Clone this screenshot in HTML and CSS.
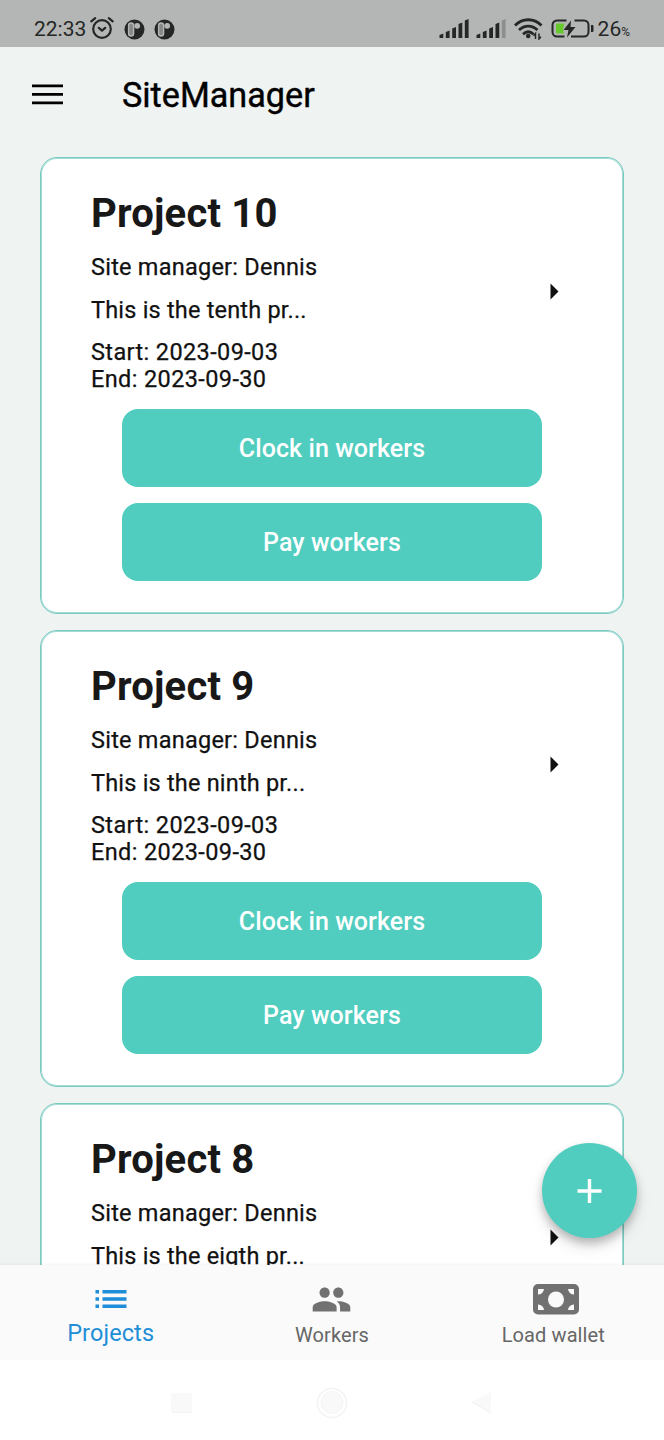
FILE: index.html
```html
<!DOCTYPE html>
<html lang="en">
<head>
<meta charset="utf-8">
<title>SiteManager</title>
<link rel="stylesheet" href="styles.css">
</head>
<body>
<div class="screen">
  <header class="status">
    <span class="clock">22:33</span>
    <svg class="alarm" width="24" height="24" viewBox="0 0 24 24" fill="none" stroke="#252726" stroke-width="2.2" stroke-linecap="round" stroke-linejoin="round"><circle cx="12" cy="13" r="8.8"/><path d="M8.800 11.800l3.200 2.800 3.200-2.800M1.300 5.400L5.200 2.100M22.700 5.400L18.800 2.100"/></svg>
    <svg class="pill-icon" width="21" height="21" viewBox="0 0 21 21"><circle cx="10.500" cy="10.500" r="10" fill="#252726"/><rect x="4.600" y="4" width="5" height="13" rx="2.500" fill="#858887" stroke="#b4b6b5" stroke-width="1.400"/><circle cx="13.200" cy="6.800" r="2.900" fill="#b4b6b5"/></svg>
    <svg class="pill-icon" width="21" height="21" viewBox="0 0 21 21"><circle cx="10.500" cy="10.500" r="10" fill="#252726"/><rect x="4.600" y="4" width="5" height="13" rx="2.500" fill="#858887" stroke="#b4b6b5" stroke-width="1.400"/><circle cx="13.200" cy="6.800" r="2.900" fill="#b4b6b5"/></svg>
    <div class="status-right">
      <svg width="30" height="20" viewBox="0 0 30 20" fill="#252726"><path d="M.5 16l3.800-1.500V19H.5zM6.800 13l3.800-1.500V19H6.800zM13.200 9.500L17 8v11h-3.800zM19.500 5l3.800-1.500V19h-3.800zM25.800 1.500L29.600 0v19h-3.800z"/></svg>
      <svg class="signal-two" width="30" height="20" viewBox="0 0 30 20" fill="#252726"><path d="M.5 16l3.800-1.500V19H.5zM6.800 13l3.800-1.500V19H6.800zM13.200 9.500L17 8v11h-3.800zM19.500 5l3.800-1.500V19h-3.800z"/><path fill="#8d8f8e" d="M25.800 1.500L29.600 0v19h-3.800z"/></svg>
      <svg class="wifi" width="29" height="22" viewBox="0 0 29 22"><g fill="none" stroke="#252726" stroke-width="2.800"><path d="M1 7.500C8.500-.2 20 -.2 27.500 7.500"/><path d="M5 12c5.500-5.300 13-5.300 18.500 0"/><path d="M9 16.200c3.300-3 7.200-3 10.500 0"/></g><circle cx="14.200" cy="18" r="2.300" fill="#252726"/><path d="M21.500 21v-5.500l-2 2.200M25 15.500V21l2-2.200" fill="none" stroke="#252726" stroke-width="1.500"/></svg>
      <svg class="battery" width="43" height="22" viewBox="0 0 43 22"><path d="M15.500 2.500H6a4.500 4.500 0 0 0-4.500 4.500v7A4.500 4.500 0 0 0 6 18.500h7.500M23.500 2.500H33A4.500 4.500 0 0 1 37.500 7v7a4.500 4.500 0 0 1-4.500 4.500H20" fill="none" stroke="#252726" stroke-width="2"/><path d="M5 5.500h8.500l-1.500 6 1 4H6.500A1.500 1.500 0 0 1 5 14z" fill="#66c92c"/><path d="M20 2.500L12.500 12h5l-1.500 7.500L24.500 9h-5z" fill="#252726"/><path d="M40 7h1.500a1 1 0 0 1 1 1v5a1 1 0 0 1-1 1H40z" fill="#252726"/></svg>
      <span class="percent">26<small>%</small></span>
    </div>
  </header>

  <div class="appbar">
    <svg class="menu" width="32" height="22" viewBox="0 0 32 22" fill="#000"><path d="M0 .5h31v2.800H0zM0 8.900h31v2.800H0zM0 17.400h31v2.800H0z"/></svg>
    <h1 class="app-title">SiteManager</h1>
  </div>

  <main class="projects">
    <article class="card">
      <h2 class="name">Project 10</h2>
      <p class="manager">Site manager: Dennis</p>
      <p class="desc">This is the tenth pr...</p>
      <p class="dates">Start: 2023-09-03<br>End: 2023-09-30</p>
      <button class="action">Clock in workers</button>
      <button class="action">Pay workers</button>
      <svg class="arrow" width="9" height="17" viewBox="0 0 9 17"><path d="M.5 .5l8 8-8 8z" fill="#111"/></svg>
    </article>
    <article class="card">
      <h2 class="name">Project 9</h2>
      <p class="manager">Site manager: Dennis</p>
      <p class="desc">This is the ninth pr...</p>
      <p class="dates">Start: 2023-09-03<br>End: 2023-09-30</p>
      <button class="action">Clock in workers</button>
      <button class="action">Pay workers</button>
      <svg class="arrow" width="9" height="17" viewBox="0 0 9 17"><path d="M.5 .5l8 8-8 8z" fill="#111"/></svg>
    </article>
    <article class="card">
      <h2 class="name">Project 8</h2>
      <p class="manager">Site manager: Dennis</p>
      <p class="desc">This is the eigth pr...</p>
      <svg class="arrow" width="9" height="17" viewBox="0 0 9 17"><path d="M.5 .5l8 8-8 8z" fill="#111"/></svg>
    </article>
    <button class="fab" aria-label="Add project"><svg width="26" height="26" viewBox="0 0 26 26"><path d="M12.500 1v24M.5 13h24" stroke="#fff" stroke-width="3.400"/></svg></button>
  </main>

  <nav class="tabs">
    <a class="tab active">
      <svg width="32" height="36" viewBox="0 0 32 36" fill="#1e8ed8"><path d="M.5 9h3.500v3.500H.5zM.5 16.200h3.500v3.500H.5zM.5 23.400h3.500v3.500H.5zM7.500 9h24v3.500h-24zM7.500 16.200h24v3.500h-24zM7.500 23.400h24v3.500h-24z"/></svg>
      <span>Projects</span>
    </a>
    <a class="tab">
      <svg width="41" height="41" viewBox="0 0 24 24" fill="#717171"><path d="M16 11c1.660 0 2.990-1.340 2.990-3S17.660 5 16 5s-3 1.340-3 3 1.340 3 3 3zm-8 0c1.660 0 2.990-1.340 2.990-3S9.660 5 8 5 5 6.340 5 8s1.340 3 3 3zm0 2c-2.330 0-7 1.170-7 3.500V19h14v-2.500c0-2.330-4.670-3.500-7-3.500zm8 0c-.29 0-.62.02-.97.05 1.160.84 1.970 1.970 1.970 3.450V19h6v-2.500c0-2.330-4.670-3.500-7-3.500z"/></svg>
      <span>Workers</span>
    </a>
    <a class="tab wallet">
      <svg width="46" height="36" viewBox="0 0 46 36"><rect y="3" width="46" height="30.500" rx="5" fill="#717171"/><path d="M5 8h6a6 6 0 0 1-6 5.500zM41 8h-6a6 6 0 0 0 6 5.500zM5 29h6a6 6 0 0 0-6-5.500zM41 29h-6a6 6 0 0 1 6-5.500z" fill="#fafafa"/><circle cx="23" cy="18.500" r="8" fill="#fafafa"/></svg>
      <span>Load wallet</span>
    </a>
  </nav>

  <footer class="system">
    <svg width="22" height="22" viewBox="0 0 22 22"><path d="M0 1h21v19H0z" fill="#f9f9f9"/><path d="M1 20.500h20" stroke="#f2f2f2"/></svg>
    <svg class="home" width="32" height="32" viewBox="0 0 32 32"><circle cx="16" cy="16" r="14.500" fill="#fff" stroke="#f3f3f3" stroke-width="1.500"/><circle cx="16" cy="15.500" r="11" fill="#f9f9f9" stroke="#f5f5f5"/></svg>
    <svg width="22" height="24" viewBox="0 0 22 24"><path d="M20 1v20L1 11z" fill="#f9f9f9"/><path d="M1 11l19 11" stroke="#f0f0f0"/></svg>
  </footer>
</div>
</body>
</html>
```
FILE: styles.css
```css
* { box-sizing: border-box; }
body { margin: 0; font-family: Roboto, "Noto Sans", sans-serif; }
h1, h2, p { margin: 0; }
svg { display: block; flex: none; }
.screen { width: 664px; height: 1440px; display: flex; flex-direction: column; overflow: hidden; background: #eff3f2; }

.status { height: 47px; flex: none; display: flex; align-items: center; padding: 11px 34px 0; background: #b4b6b5; color: #252726; }
.clock { width: 56px; font-size: 21px; line-height: 26px; }
.alarm { margin-bottom: 2px; }
.pill-icon { margin-left: 9.500px; }
.status-right { margin-left: auto; display: flex; align-items: center; }
.signal-two { margin-left: 7px; }
.wifi { margin-left: 8px; }
.battery { margin-left: 8px; }
.percent { margin: 3px 0 0 4px; font-size: 21px; line-height: 26px; }
.percent small { font-size: 12px; }

.appbar { height: 110px; flex: none; display: flex; align-items: center; padding: 0 32px 14px; }
.menu { margin-right: 58px; }
.app-title { font-size: 34.200px; line-height: 44px; font-weight: 400; color: #000; -webkit-text-stroke: .4px #000; }

.projects { position: relative; height: 1108px; flex: none; display: flex; flex-direction: column; gap: 16px; padding: 0 40px; overflow: hidden; }
.card { position: relative; height: 457px; flex: none; padding: 31px 80px 0 50px; background: #fff; border: 1px solid #79cbc0; box-shadow: inset 0 0 0 1px #a4dcd5; border-radius: 17px; color: #111; }
.name { font-size: 40px; line-height: 50px; font-weight: 700; letter-spacing: .2px; color: #181818; }
.manager, .desc, .dates { font-size: 23.500px; line-height: 27px; letter-spacing: .24px; -webkit-text-stroke: .25px #111; }
.manager { margin-top: 15px; }
.desc { margin-top: 16px; letter-spacing: .2px; }
.dates { margin-top: 15px; letter-spacing: .38px; }
.action { display: block; width: 420px; height: 78px; margin: 16px 0 0 31px; padding: 2px 0 0; border: 0; border-radius: 16px; background: #50cdbf; color: #fff; font: 500 25px/28px Roboto, sans-serif; letter-spacing: .08px; }
.arrow { position: absolute; left: 509px; top: 125px; }
.fab { position: absolute; left: 542px; top: 986px; width: 95px; height: 95px; display: grid; place-items: center; padding: 0; border: 0; border-radius: 50%; background: #50cdbf; box-shadow: 0 5px 8px rgba(0,0,0,.22), 0 9px 16px rgba(0,0,0,.10); }

.tabs { height: 95px; flex: none; display: grid; grid-template-columns: repeat(3, 1fr); background: #fafafa; box-shadow: 0 -1px 3px rgba(0,0,0,.05); position: relative; }
.tab { display: flex; flex-direction: column; align-items: center; justify-content: space-between; padding: 16px 0 11px; color: #666; font-size: 20px; line-height: 28px; letter-spacing: .1px; }
.tab:nth-child(2) { padding-top: 14px; }
.wallet svg { margin-left: 5px; }
.active { color: #1e8ed8; font-size: 23.500px; padding-bottom: 13px; }
.system { height: 80px; flex: none; display: flex; align-items: center; justify-content: center; gap: 123px; background: #fff; padding-top: 5px; }
```
